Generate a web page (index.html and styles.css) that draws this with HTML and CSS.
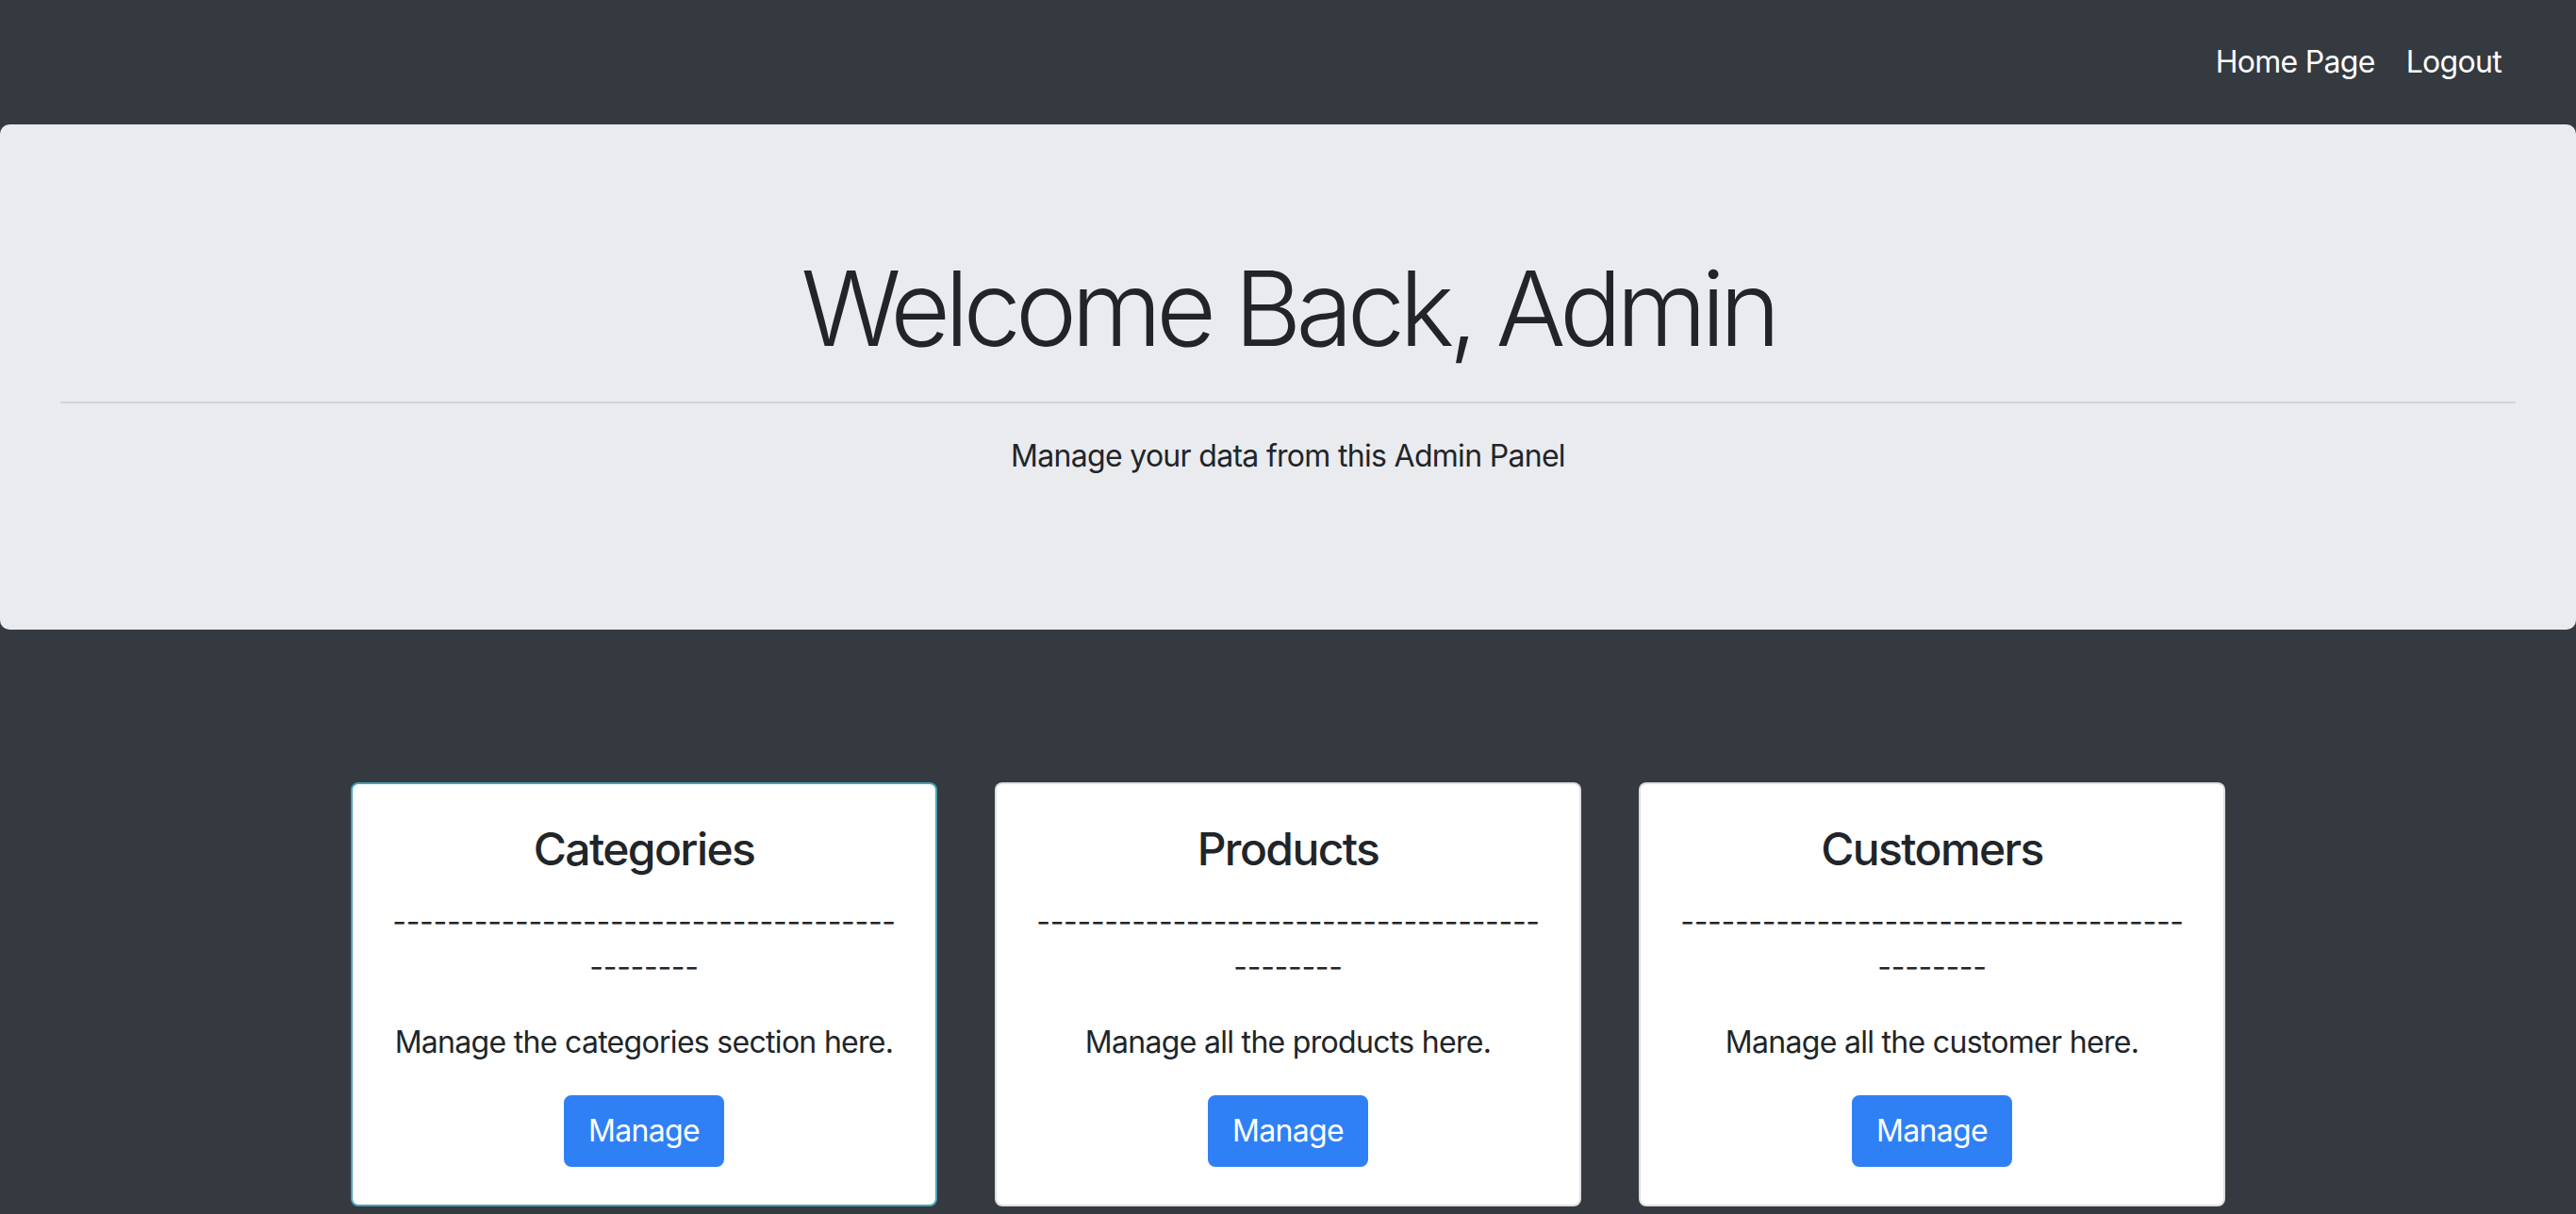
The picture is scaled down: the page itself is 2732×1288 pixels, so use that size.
FILE: index.html
```html
<!DOCTYPE html>
<html lang="en">
<head>
<meta charset="utf-8">
<title>Admin Panel</title>
<link rel="stylesheet" href="styles.css">
</head>
<body>
<nav class="navbar">
  <a class="nav-link" href="#">Home Page</a>
  <a class="nav-link" href="#">Logout</a>
</nav>
<header class="jumbotron">
  <h1 class="display">Welcome Back, Admin</h1>
  <hr class="rule">
  <p class="lead-text">Manage your data from this Admin Panel</p>
</header>
<main class="cards">
  <div class="card card-active">
    <h4 class="card-title">Categories</h4>
    <p class="dashes">---------------------------------------------</p>
    <p class="card-text">Manage the categories section here.</p>
    <a class="btn" href="#">Manage</a>
  </div>
  <div class="card">
    <h4 class="card-title">Products</h4>
    <p class="dashes">---------------------------------------------</p>
    <p class="card-text">Manage all the products here.</p>
    <a class="btn" href="#">Manage</a>
  </div>
  <div class="card">
    <h4 class="card-title">Customers</h4>
    <p class="dashes">---------------------------------------------</p>
    <p class="card-text">Manage all the customer here.</p>
    <a class="btn" href="#">Manage</a>
  </div>
</main>
</body>
</html>
```
FILE: styles.css
```css
html, body {
  margin: 0;
  padding: 0;
}
body {
  background: #343a40;
  color: #212529;
  font-family: Inter, "Noto Sans", "Liberation Sans", sans-serif;
  font-size: 32px;
  line-height: 1.5;
  letter-spacing: -0.7px;
}
.navbar {
  height: 132px;
  display: flex;
  justify-content: flex-end;
  align-items: center;
  gap: 33px;
  padding-right: 79px;
  box-sizing: border-box;
}
.nav-link {
  color: #ffffff;
  text-decoration: none;
  font-size: 32px;
}
.jumbotron {
  background: #e9ebef;
  border-radius: 10px;
  padding: 128px 64px;
  text-align: center;
}
.display {
  font-size: 110px;
  font-weight: 300;
  line-height: 1.22;
  margin: 0 0 16px;
  letter-spacing: -6px;
}
.rule {
  margin: 32px 0;
  border: 0;
  border-top: 2px solid rgba(0, 0, 0, 0.1);
}
.lead-text {
  margin: 0 0 32px;
}
.cards {
  display: flex;
  justify-content: center;
  gap: 61px;
  margin-top: 162px;
}
.card {
  width: 622px;
  box-sizing: border-box;
  background: #ffffff;
  border: 2px solid rgba(0, 0, 0, 0.125);
  border-radius: 8px;
  padding: 40px;
  text-align: center;
}
.card-active {
  border-color: #47a3b6;
}
.card-title {
  font-size: 48px;
  font-weight: 500;
  line-height: 1.2;
  margin: 0 0 24px;
  letter-spacing: -1.6px;
}
.dashes {
  margin: 0 0 32px;
  letter-spacing: -0.3px;
  word-break: break-all;
}
.card-text {
  margin: 0 0 32px;
}
.btn {
  display: inline-block;
  background: #3080f5;
  color: #ffffff;
  text-decoration: none;
  border: 2px solid #3080f5;
  border-radius: 8px;
  padding: 12px 24px;
  font-size: 32px;
  line-height: 1.5;
}
```
